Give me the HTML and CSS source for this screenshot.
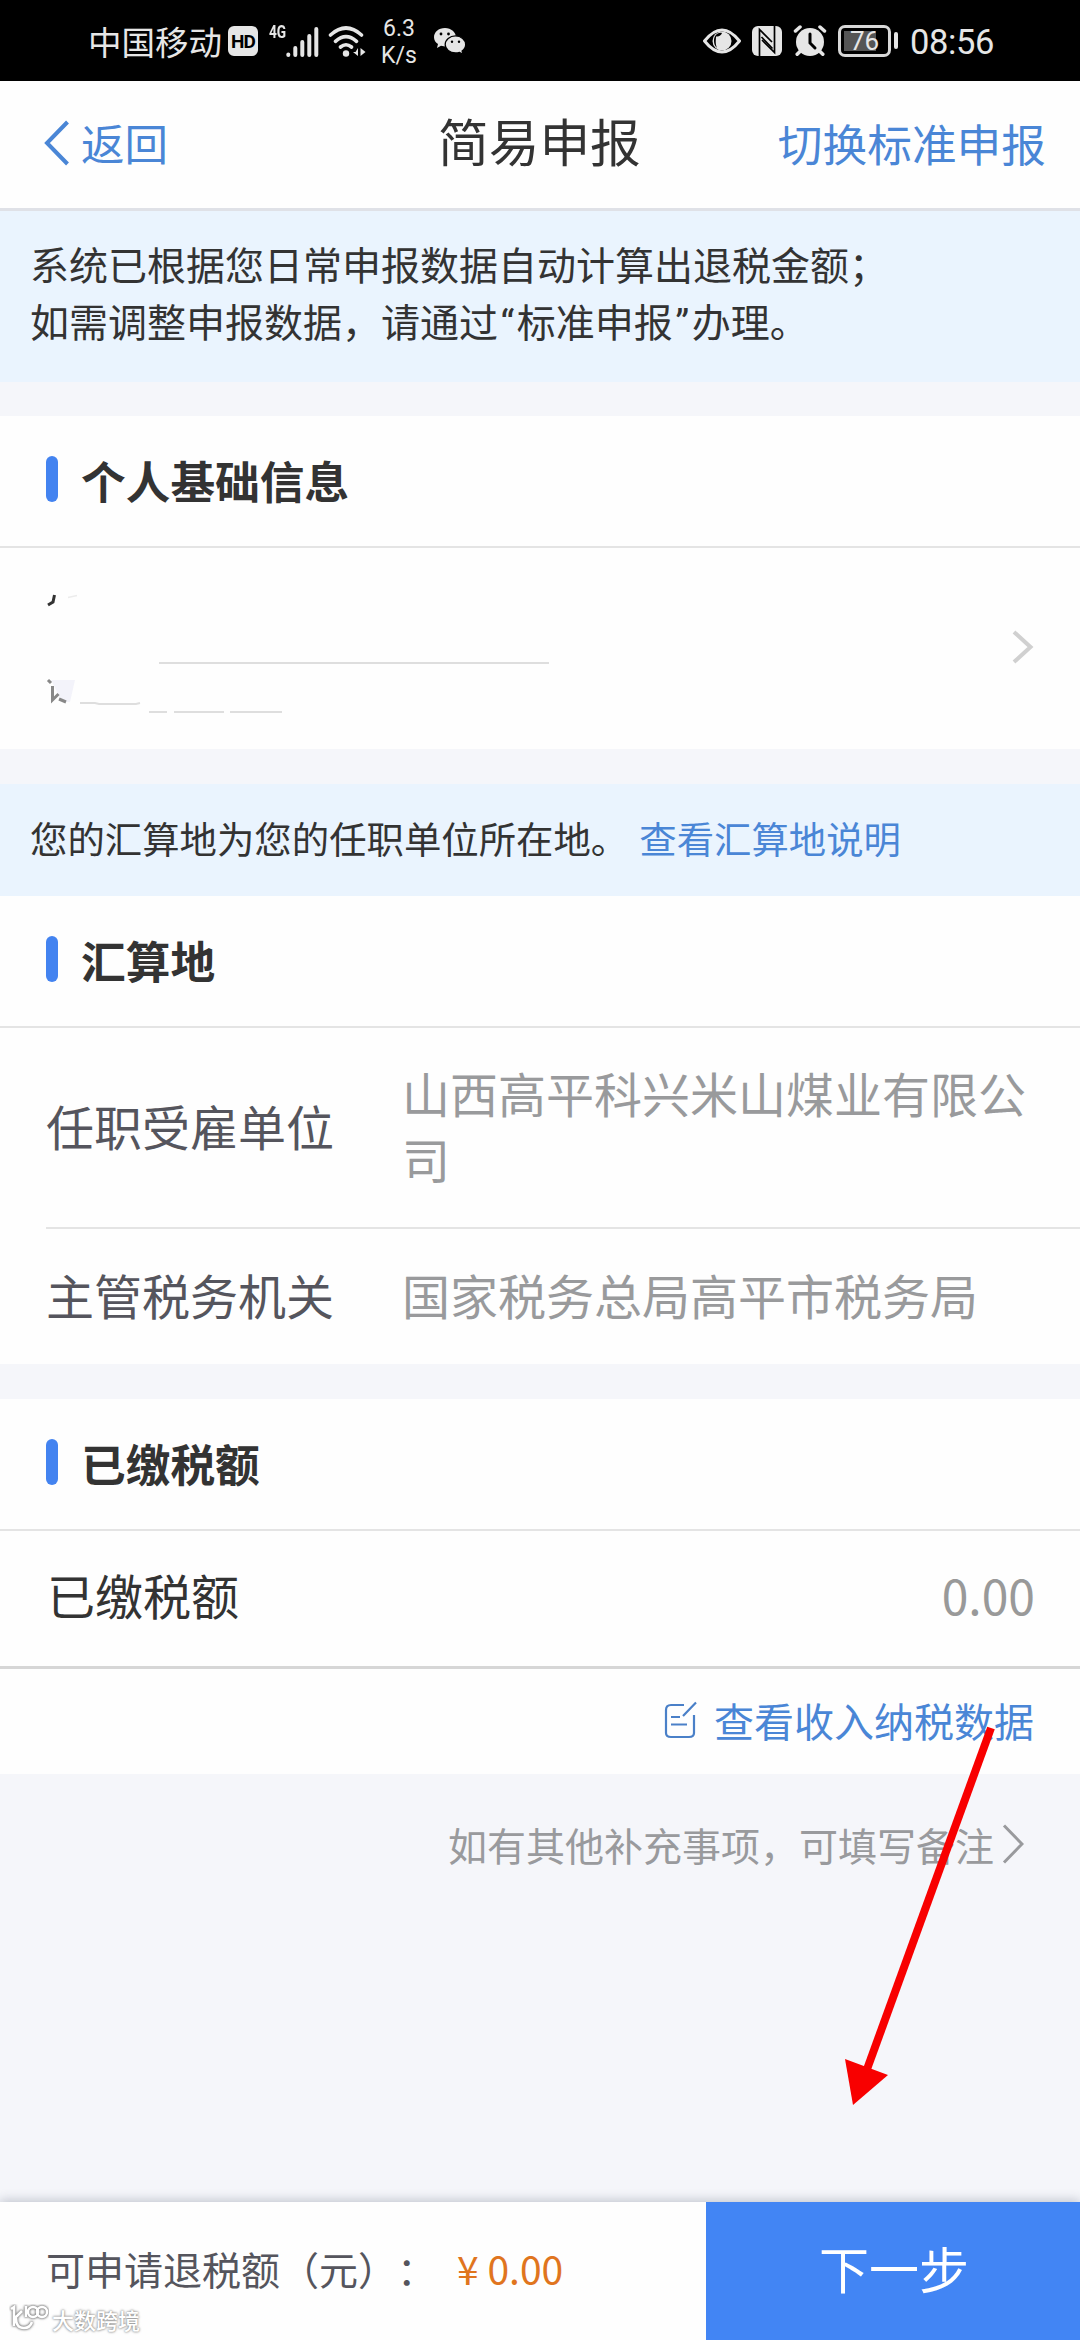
FILE: index.html
```html
<!DOCTYPE html>
<html lang="zh-CN">
<head>
<meta charset="utf-8">
<title>简易申报</title>
<link rel="stylesheet" href="styles.css">
</head>
<body>
<div class="screen">
  <div class="status">
    <span class="carrier">中国移动</span>
    <span class="hd">HD</span>
    <span class="net">4G</span>
    <svg class="signal" width="33" height="34" viewBox="17 0 33 34">
      <path d="M19.300 30.500v.5M26.300 24v7M33.300 18v13M40.300 12v19M47.300 5v26" stroke="#e6e6e6" stroke-width="4" stroke-linecap="round"/>
    </svg>
    <svg class="wifi" width="38" height="34" viewBox="0 0 38 34">
      <g fill="none" stroke="#e6e6e6" stroke-width="3.600" stroke-linecap="round">
        <path d="M2.500 11Q18 -3 33.500 11M7.500 17.300Q18 8 28.500 17.300M12.500 23Q18 18.500 23.500 23"/>
      </g>
      <circle cx="18" cy="29.500" r="3.200" fill="#e6e6e6"/>
      <path d="M30 24v8l-5-4h2.500zM32.500 24l5 4-5 4z" fill="#e6e6e6"/>
    </svg>
    <span class="speed"><span>6.3</span><span>K/s</span></span>
    <svg class="wechat" width="34" height="28" viewBox="0 0 34 28">
      <path d="M12 1C5.500 1 1 5.200 1 10.200c0 3 1.600 5.300 4 6.900L4 21l4-2.300 4 .7C18 19.500 23 15 23 10.200S18.200 1 12 1z" fill="#e6e6e6"/>
      <path d="M22.500 8.800c-5.800 0-10.300 4-10.300 8.700s4.500 8.500 10.300 8.500c1.400 0 2.700-.2 4-.6l3.500 2-.9-3.300c2.200-1.600 3.600-3.900 3.600-6.600 0-4.700-4.600-8.700-10.200-8.700z" fill="#e6e6e6" stroke="#000" stroke-width="1.300"/>
      <g fill="#000"><circle cx="8" cy="7" r="1.400"/><circle cx="15.500" cy="7" r="1.400"/><circle cx="19" cy="14.800" r="1.200"/><circle cx="26" cy="14.800" r="1.200"/></g>
    </svg>
    <span class="grow"></span>
    <svg class="eye" width="38" height="26" viewBox="0 0 38 26">
      <path d="M1.500 13Q19-9 36.500 13 19 35 1.500 13z" fill="none" stroke="#e6e6e6" stroke-width="3" stroke-linejoin="round"/>
      <circle cx="19" cy="13" r="9.500" fill="#e6e6e6"/>
      <path d="M13 8.500c3 .5 5-1 6-3.500-5-1-8 3-8 8 0 3 1 5 3 7-2-5-1-8-1-11.500z" fill="#000"/>
    </svg>
    <svg class="nfc" width="30" height="30" viewBox="0 0 30 30">
      <rect width="30" height="30" rx="6" fill="#e6e6e6"/>
      <path d="M7.500 30V3.500L20 16M22.500 0v26.500L10 14" fill="none" stroke="#000" stroke-width="1.700"/>
      <path d="M9.500 11L20.500 22.500" stroke="#000" stroke-width="1.700"/>
    </svg>
    <svg class="alarm" width="34" height="31" viewBox="0 0 34 31">
      <circle cx="17" cy="17" r="14" fill="#e6e6e6"/>
      <g fill="none" stroke="#e6e6e6" stroke-width="3.500" stroke-linecap="round"><path d="M2.500 6L7 2M31.500 6L27 2M7.500 26l-3.300 3.300M26.500 26l3.300 3.300"/></g>
      <path d="M17 9v9l5 5" fill="none" stroke="#000" stroke-width="3" stroke-linecap="round"/>
    </svg>
    <span class="battery"><span class="level">76</span></span>
    <span class="nub"></span>
    <span class="clock">08:56</span>
  </div>

  <div class="nav">
    <a class="back"><svg width="26" height="46" viewBox="0 0 26 46"><path d="M23.500 2L3 23l20.500 21" fill="none" stroke="#4a86d6" stroke-width="4"/></svg><span>返回</span></a>
    <span class="title">简易申报</span>
    <a class="switch">切换标准申报</a>
  </div>

  <div class="notice">
    <p>系统已根据您日常申报数据自动计算出退税金额；</p>
    <p>如需调整申报数据，请通过<span class="quote">“</span>标准申报<span class="quote">”</span>办理。</p>
  </div>

  <section class="card profile">
    <h2><i></i><span>个人基础信息</span></h2>
    <div class="person">
      <svg class="scraps" width="520" height="130" viewBox="0 0 520 130">
        <path d="M8.500 2l-1.500 7-5 3" fill="none" stroke="#333" stroke-width="3"/>
        <path d="M22 4.500l9-2" stroke="#ececec" stroke-width="1.500"/>
        <path d="M113 70h390M34 110h15l4 1h37l4-1M103 119h18M128 119h50M184 119h52" fill="none" stroke="#dedede" stroke-width="2"/>
        <path d="M5 87h24l-5 22h-8z" fill="#f3f3fa"/>
        <path d="M2 87l3 3M6.500 93v14l6-6M13 106l7 3" fill="none" stroke="#888" stroke-width="3"/>
      </svg>
      <svg class="more" width="22" height="34" viewBox="0 0 22 34"><path d="M2 2l16.500 15L2 32" fill="none" stroke="#d0d0d0" stroke-width="4"/></svg>
    </div>
  </section>

  <div class="notice place"><p>您的汇算地为您的任职单位所在地。</p><a>查看汇算地说明</a></div>

  <section class="card">
    <h2><i></i><span>汇算地</span></h2>
    <div class="row employer"><span class="label">任职受雇单位</span><span class="value">山西高平科兴米山煤业有限公司</span></div>
    <div class="row office"><span class="label">主管税务机关</span><span class="value">国家税务总局高平市税务局</span></div>
  </section>

  <section class="card paid">
    <h2><i></i><span>已缴税额</span></h2>
    <div class="row amount"><span>已缴税额</span><span class="num">0.00</span></div>
    <div class="data">
      <svg width="34" height="38" viewBox="0 0 34 38"><path d="M20 4H7Q2 4 2 9v23q0 4 5 4h18q5 0 5-4V14M19 15L32 1.500M7 16h9M7 23.500h16" fill="none" stroke="#4a80c8" stroke-width="2.200"/></svg>
      <a>查看收入纳税数据</a>
    </div>
  </section>

  <div class="remark"><span>如有其他补充事项，可填写备注</span><svg width="22" height="40" viewBox="0 0 22 40"><path d="M2 1.500L20 20 2 38.500" fill="none" stroke="#999a9d" stroke-width="3"/></svg></div>

  <footer>
    <div class="refund"><span>可申请退税额（元）：</span><b>¥ 0.00</b></div>
    <button>下一步</button>
  </footer>

  <svg class="arrow" width="160" height="380" viewBox="0 0 160 380">
    <path d="M151 2L26 346" stroke="#f80000" stroke-width="8"/>
    <path d="M5 333l43 16-35 30z" fill="#f80000"/>
  </svg>
  <div class="mark">
    <svg width="40" height="28" viewBox="0 0 40 28"><g class="logo"><path d="M2 5l3-2v19M5 15l8-8M7 14q0 10 8 10 6 0 8-6M17 2v11"/><circle cx="24" cy="8" r="5"/><circle cx="33" cy="8" r="5"/></g></svg>
    <span>大数跨境</span>
  </div>
</div>
</body>
</html>
```
FILE: styles.css
```css
* { box-sizing: border-box; }
body {
  margin: 0;
  font-family: "Noto Sans CJK SC", sans-serif;
  text-spacing-trim: space-all;
  color: #333;
}
p, h2 { margin: 0; }
.screen {
  position: relative;
  width: 1080px;
  height: 2340px;
  overflow: hidden;
  display: flex;
  flex-direction: column;
  background: #f5f6fa;
}

/* status bar */
.status {
  height: 81px;
  padding: 0 86px 0 88px;
  display: flex;
  align-items: center;
  background: #000;
  color: #e6e6e6;
}
.carrier { font-size: 33.500px; line-height: 40px; width: 140px; white-space: nowrap; }
.hd {
  width: 30px;
  height: 30px;
  border-radius: 6px;
  background: #e6e6e6;
  color: #000;
  font: bold 19px/31px "Roboto", sans-serif;
  letter-spacing: -1px;
  text-align: center;
}
.net {
  width: 17px;
  margin: 0 0 18px 11px;
  font: bold 19px/20px "Roboto", sans-serif;
  transform: scaleX(.72);
  transform-origin: 0 50%;
}
.signal { margin-right: 9px; }
.speed {
  display: flex;
  flex-direction: column;
  width: 48px;
  margin-left: 9px;
  padding-top: 2px;
  font: 23px/27px "Roboto", sans-serif;
  align-items: center;
}
.wechat { margin-left: 10px; }
.grow { flex: 1; }
.nfc { margin-left: 11px; }
.alarm { margin-left: 11px; }
.battery {
  width: 53px;
  height: 32px;
  margin-left: 11px;
  padding: 3px;
  border: 3px solid #d8d8d8;
  border-radius: 7px;
}
.level {
  display: block;
  height: 20px;
  background: linear-gradient(90deg, #555 32px, #000 32px);
  color: #e6e6e6;
  font: 26px/21px "Roboto", sans-serif;
  text-align: center;
}
.nub { width: 4px; height: 17px; margin-left: 3px; border-radius: 2px; background: #e6e6e6; }
.clock { width: 84px; margin-left: 12px; font: 34.500px/40px "Roboto", sans-serif; letter-spacing: -.4px; padding-top: 2px; }

/* title bar */
.nav {
  height: 130px;
  padding: 0 34px 3px 44px;
  display: grid;
  grid-template-columns: 1fr 208px 1fr;
  align-items: center;
  border-bottom: 3px solid #dfe1e7;
  background: #fefefe;
}
.nav a { color: #4a86d6; }
.back { display: flex; align-items: center; gap: 11px; font-size: 43.500px; }
.back span { line-height: 60px; }
.title { font-size: 50.700px; line-height: 60px; margin: 0 0 6px -3px; white-space: nowrap; }
.switch { justify-self: end; font-size: 44.700px; line-height: 60px; white-space: nowrap; }

.notice {
  height: 171px;
  padding: 24px 30px 0;
  background: #eaf4fe;
  font-size: 39px;
  line-height: 57px;
  white-space: nowrap;
}
.quote { font-family: "Roboto", sans-serif; margin: 0 2.500px; }
.place {
  height: 112px;
  margin-top: 35px;
  padding-top: 26px;
  display: flex;
  font-size: 37.400px;
}
.place a { color: #4a86d6; margin-left: 11px; }

/* cards */
.card { background: #fefefe; }
.profile { margin-top: 34px; height: 333px; }
.card h2 {
  height: 132px;
  padding-left: 46px;
  display: flex;
  gap: 23px;
  border-bottom: 2px solid #e4e4e4;
  font-size: 44.700px;
  font-weight: 700;
  line-height: 60px;
}
h2 i { width: 12px; height: 46px; margin-top: 40px; border-radius: 6px; background: #4383f0; }
h2 span { padding-top: 34px; }
.person {
  height: 201px;
  padding: 0 46px 3px;
  display: flex;
  align-items: center;
  justify-content: space-between;
}
.scraps { margin-top: 21px; }
.row { display: flex; align-items: center; font-size: 48px; line-height: 66px; }
.label { width: 356px; color: #55555d; }
.value { flex: 1; color: #999a9c; }
.employer { height: 201px; margin-left: 46px; padding: 0 50px 6px 0; border-bottom: 2px solid #e4e4e4; }
.office { height: 135px; padding: 0 0 6px 46px; }
.paid { margin-top: 35px; }
.amount { height: 138px; padding: 0 45px 9px 47px; justify-content: space-between; border-bottom: 3px solid #d6d6d6; }
.num { color: #999; }
.data {
  height: 105px;
  padding: 0 46px 3px 0;
  display: flex;
  align-items: center;
  justify-content: flex-end;
  gap: 16px;
  font-size: 40px;
}
.data a { color: #4a86d6; line-height: 60px; }

.remark {
  margin: 40px 56px 0 0;
  display: flex;
  align-items: center;
  justify-content: flex-end;
  gap: 8px;
  font-size: 39px;
  line-height: 60px;
  color: #999a9d;
}

/* bottom bar */
footer {
  height: 138px;
  margin-top: auto;
  display: flex;
  background: #fefefe;
  box-shadow: 0 -2px 10px rgba(40, 50, 80, .25);
}
.refund { width: 706px; padding: 36px 0 0 46px; display: flex; gap: 21px; font-size: 39px; line-height: 60px; color: #55555d; white-space: nowrap; }
.refund b { font-weight: 400; color: #e0751e; }
button {
  flex: 1;
  border: 0;
  padding: 0 0 9px 2px;
  background: #4285f4;
  color: #fff;
  font: 50px/60px "Noto Sans CJK SC", sans-serif;
}

/* overlays */
.arrow { position: absolute; left: 840px; top: 1726px; }
.mark {
  position: absolute;
  left: 9px;
  top: 2304px;
  display: flex;
  gap: 3px;
  color: #fff;
  font-size: 22px;
  line-height: 30px;
  font-weight: 500;
  text-shadow: 0 0 2px #888, 0 0 3px #999;
}
.logo { fill: none; stroke: #fff; stroke-width: 2.500; filter: drop-shadow(0 0 1px #777) drop-shadow(0 0 1px #999); }
```
